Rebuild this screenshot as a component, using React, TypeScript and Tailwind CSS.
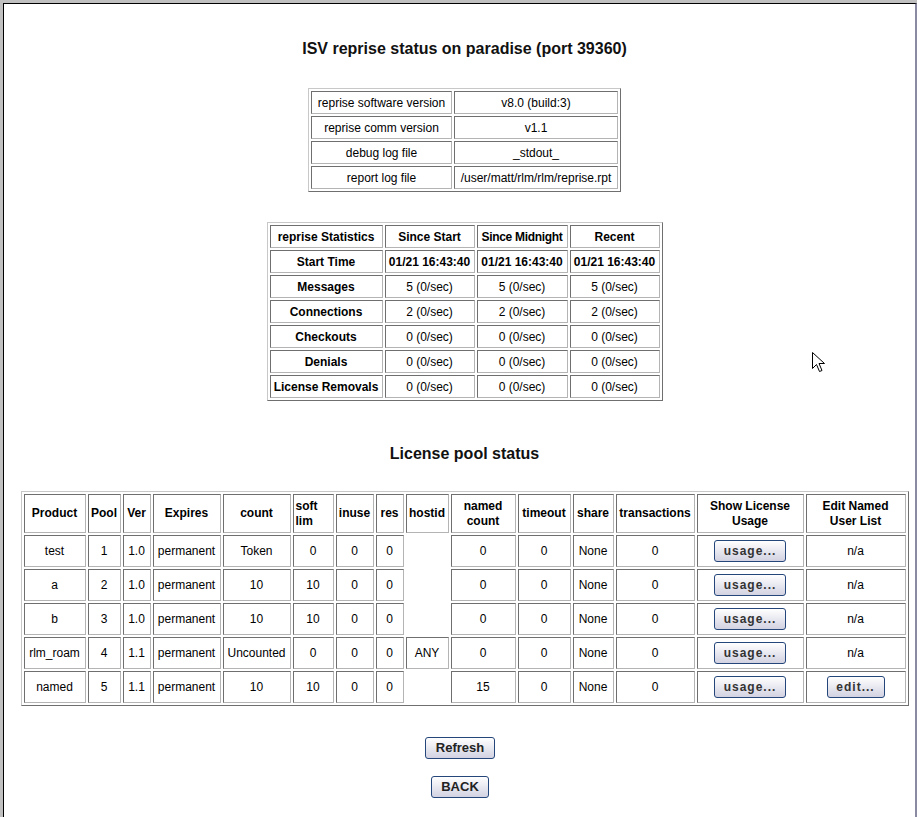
import type { ReactNode } from 'react';

const font = { fontFamily: '"Liberation Sans", Arial, sans-serif' };

const cellCls =
  'border border-t-[#6f6f6f] border-l-[#6f6f6f] border-b-[#b4b4b4] border-r-[#b4b4b4] px-[2px] py-0 text-[12px] leading-[14px] text-center text-black';
const tableCls =
  'border-separate border-spacing-[2px] border border-t-[#c8c8c8] border-l-[#c8c8c8] border-b-[#6f6f6f] border-r-[#6f6f6f] table-fixed';

function Cell({ children, w, bold, className = '' }: { children?: ReactNode; w?: string; bold?: boolean; className?: string }) {
  return <td className={`${cellCls} ${w ?? ''} ${bold ? 'font-bold' : ''} ${className}`}>{children}</td>;
}

function Btn({ label, w }: { label: string; w: string }) {
  return (
    <button
      className={`${w} inline-flex h-[22px] items-center justify-center rounded-[3px] border border-[#24467a] bg-linear-to-b from-white to-[#d2d2e2] align-middle text-[12px] font-bold tracking-[1px] text-[#333]`}
    >
      {label}
    </button>
  );
}

const versions = [
  ['reprise software version', 'v8.0 (build:3)'],
  ['reprise comm version', 'v1.1'],
  ['debug log file', '_stdout_'],
  ['report log file', '/user/matt/rlm/rlm/reprise.rpt'],
];

const stats = [
  ['Start Time', '01/21 16:43:40', '01/21 16:43:40', '01/21 16:43:40'],
  ['Messages', '5 (0/sec)', '5 (0/sec)', '5 (0/sec)'],
  ['Connections', '2 (0/sec)', '2 (0/sec)', '2 (0/sec)'],
  ['Checkouts', '0 (0/sec)', '0 (0/sec)', '0 (0/sec)'],
  ['Denials', '0 (0/sec)', '0 (0/sec)', '0 (0/sec)'],
  ['License Removals', '0 (0/sec)', '0 (0/sec)', '0 (0/sec)'],
];

const poolCols = [
  'w-[62px]', 'w-[33px]', 'w-[28px]', 'w-[68px]', 'w-[68px]', 'w-[41px]', 'w-[38px]', 'w-[28px]',
  'w-[43px]', 'w-[65px]', 'w-[53px]', 'w-[41px]', 'w-[79px]', 'w-[107px]', 'w-[100px]',
];

const pools = [
  ['test', '1', '1.0', 'permanent', 'Token', '0', '0', '0', '', '0', '0', 'None', '0', 'n/a'],
  ['a', '2', '1.0', 'permanent', '10', '10', '0', '0', '', '0', '0', 'None', '0', 'n/a'],
  ['b', '3', '1.0', 'permanent', '10', '10', '0', '0', '', '0', '0', 'None', '0', 'n/a'],
  ['rlm_roam', '4', '1.1', 'permanent', 'Uncounted', '0', '0', '0', 'ANY', '0', '0', 'None', '0', 'n/a'],
  ['named', '5', '1.1', 'permanent', '10', '10', '0', '0', '', '15', '0', 'None', '0', 'edit'],
];

export default function App() {
  return (
    <div className="relative h-[817px] w-[919px] bg-white" style={font}>
      <div className="h-full w-[917px] border-t-[3px] border-l-[3px] border-[#c0c0c0]">
        <div className="flex h-full flex-col items-center border-t border-l border-r-2 border-t-black border-l-black border-r-[#8a8aa2] pl-[10px]">
          <h1 className="mt-[35px] h-[19px] text-[16px] font-bold leading-[19px] text-[#111]">
            ISV reprise status on paradise (port 39360)
          </h1>

          <table className={`${tableCls} mt-[30px] w-[313px]`}>
            <tbody>
              {versions.map(([k, v]) => (
                <tr key={k} className="h-[23px]">
                  <Cell w="w-[141px]">{k}</Cell>
                  <Cell w="w-[164px]">{v}</Cell>
                </tr>
              ))}
            </tbody>
          </table>

          <table className={`${tableCls} mt-[30px] w-[396px] whitespace-nowrap`}>
            <tbody>
              <tr className="h-[23px]">
                <Cell w="w-[113px]" bold className="px-0">reprise Statistics</Cell>
                <Cell w="w-[90px]" bold className="px-0">Since Start</Cell>
                <Cell w="w-[91px]" bold className="px-0 tracking-[-0.3px]">Since Midnight</Cell>
                <Cell w="w-[90px]" bold className="px-0">Recent</Cell>
              </tr>
              {stats.map((row, i) => (
                <tr key={row[0]} className="h-[23px]">
                  {row.map((c, j) => (
                    <Cell key={j} bold={j === 0 || i === 0} className="px-0">{c}</Cell>
                  ))}
                </tr>
              ))}
            </tbody>
          </table>

          <h2 className="mt-[43px] h-[19px] text-[16px] font-bold leading-[19px] text-[#111]">License pool status</h2>

          <table className={`${tableCls} mt-[28px] w-[888px]`}>
            <tbody>
              <tr className="h-[39px]">
                {['Product', 'Pool', 'Ver', 'Expires', 'count', 'soft lim', 'inuse', 'res', 'hostid', 'named count', 'timeout', 'share', 'transactions', 'Show License Usage', 'Edit Named User List'].map(
                  (h, i) => (
                    <Cell key={h} w={poolCols[i]} bold className={`leading-[15px] ${h === 'soft lim' ? 'text-left' : ''}`}>
                      {h}
                    </Cell>
                  ),
                )}
              </tr>
              {pools.map((row) => (
                <tr key={row[0]} className="h-[32px]">
                  {row.slice(0, 13).map((c, j) =>
                    c === '' ? (
                      <td key={j} className="p-0" />
                    ) : (
                      <Cell key={j} className="px-[1px]">{c}</Cell>
                    ),
                  )}
                  <Cell>
                    <Btn label="usage..." w="w-[72px]" />
                  </Cell>
                  <Cell>{row[13] === 'edit' ? <Btn label="edit..." w="w-[58px]" /> : 'n/a'}</Cell>
                </tr>
              ))}
            </tbody>
          </table>

          <button className="mt-[31px] mr-[9px] h-[22px] w-[70px] rounded-[3px] border border-[#24467a] bg-linear-to-b from-white to-[#d2d2e2] text-[13px] font-bold text-[#222]">
            Refresh
          </button>
          <button className="mt-[17px] mr-[9px] h-[22px] w-[58px] rounded-[3px] border border-[#24467a] bg-linear-to-b from-white to-[#d2d2e2] text-[13px] font-bold text-[#222]">
            BACK
          </button>
        </div>
      </div>

      <svg className="absolute left-[812px] top-[352px]" width="14" height="22" viewBox="0 0 14 22">
        <path d="M0.5 0.5 L0.5 16.5 L4.5 12.5 L7.5 19.5 L10 18.5 L7 11.5 L12.5 11.5 Z" fill="white" stroke="black" strokeWidth="1" />
      </svg>
    </div>
  );
}
